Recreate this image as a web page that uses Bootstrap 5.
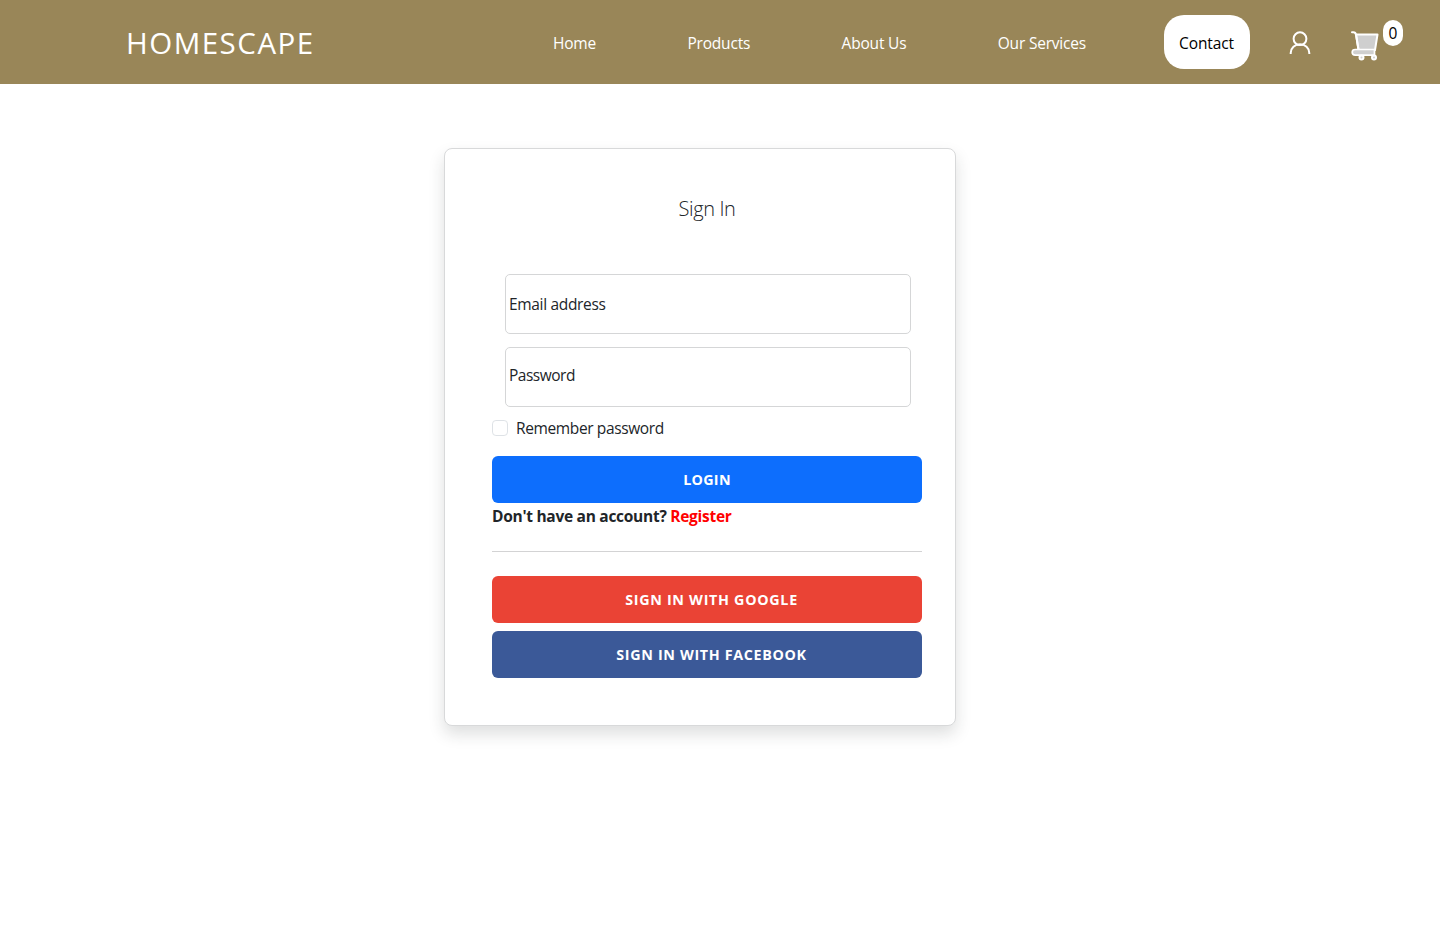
<!DOCTYPE html>
<html lang="en">
<head>
<meta charset="utf-8">
<meta name="viewport" content="width=device-width, initial-scale=1">
<title>Homescape</title>
<link href="https://cdn.jsdelivr.net/npm/bootstrap@5.3.0/dist/css/bootstrap.min.css" rel="stylesheet">
<style>
body{font-family:"Open Sans","Noto Sans",sans-serif;font-size:15.5px;line-height:24px;color:#212529;min-height:100vh}
.site-nav{background:#998658;height:84px}
.site-nav a{color:#fff;text-decoration:none;white-space:nowrap}
.site-nav .brand{font-size:29.5px;line-height:40px;letter-spacing:1.5px;margin-left:126px;width:427px;padding-top:2px}
.menu{width:533px;padding-top:2px;letter-spacing:-.2px}
.site-nav .contact{background:#fff;color:#000;border-radius:20px;height:54px;width:86px;margin-left:78px;padding:2px 1px 0 0;letter-spacing:-.1px}
.person{margin:2px 0 0 39px}
.cart{margin:7px 0 0 40px}
.count{background:#fff;color:#000;border-radius:10px;width:20px;height:26px;margin:-18px 0 0 4px;line-height:27px;font-size:15.5px}
.login-card{width:512px;height:578px;margin:64px 0 0 444px;padding:47px 33px 0 47px;border-radius:8px;border-color:#d8d9da}
.title{font-size:20px;line-height:24px;font-weight:300;letter-spacing:-.4px;margin:1px 0 53px}
.field{height:60px;width:406px;margin:0 0 13px 13px;border:1px solid #d5d6d7;border-radius:5px;padding:0 3px;line-height:58px;letter-spacing:-.33px}
.field.pass{line-height:54px;letter-spacing:-.5px}
.remember{height:24px;margin-top:-4px;letter-spacing:-.38px}
.remember .form-check-input{width:16px;height:16px;margin:0 8px 0 0;border-color:#dee2e6}
.login-card .btn{height:47px;font-size:14.3px;font-weight:700;letter-spacing:.7px;border:0;border-radius:6px;color:#fff;padding:1px 0 0}
.login-card .login{margin-top:16px;letter-spacing:.3px}
.login-card .google{background:#ea4335;padding-left:9px}
.login-card .facebook{background:#3b5998;margin-top:8px;padding-left:9px;letter-spacing:.66px}
.signup{letter-spacing:-.28px;line-height:24px;height:24px;margin-top:1px}
.signup a{color:#f00;text-decoration:none}
.rule{height:1px;background:#d3d3d4;margin:23px 0 24px}
</style>
</head>
<body>
<nav class="site-nav d-flex align-items-center">
<a class="brand" href="#">HOMESCAPE</a>
<div class="menu d-flex justify-content-between">
<a href="#">Home</a><a href="#">Products</a><a href="#">About Us</a><a href="#">Our Services</a>
</div>
<a class="contact d-flex align-items-center justify-content-center" href="#">Contact</a>
<svg class="person" width="22" height="24" viewBox="0 0 22 24" fill="none" stroke="#fff" stroke-width="2"><circle cx="11" cy="7.700" r="6.400"/><path d="M1.700 23v-1a9.300 8.700 0 0 1 18.600 0v1"/></svg>
<svg class="cart" width="28" height="30" viewBox="0 0 28 30" fill="none" stroke="#fff" stroke-width="2" stroke-linejoin="round" stroke-linecap="round"><path fill="#cfcfcf" d="M5 3.500h21.500l-2.500 15.500H7.500z"/><path d="M1 1.200h1.500q2 0 2.500 2.500l2.500 15"/><path fill="#cfcfcf" stroke-width="1.700" d="M23.500 18.500H4.200q-3 0-3 2.800t3 2.800h19.300z"/><circle cx="10.500" cy="26.600" r="2" fill="#cfcfcf"/><circle cx="23" cy="26.600" r="2" fill="#cfcfcf"/></svg>
<span class="count text-center">0</span>
</nav>
<main>
<div class="card login-card shadow">
<h5 class="title text-center">Sign In</h5>
<div class="field">Email address</div>
<div class="field pass">Password</div>
<label class="remember d-flex align-items-center"><input class="form-check-input" type="checkbox"><span>Remember password</span></label>
<button class="btn btn-primary login">LOGIN</button>
<div class="signup fw-bold">Don't have an account? <a href="#">Register</a></div>
<div class="rule"></div>
<button class="btn google">SIGN IN WITH GOOGLE</button>
<button class="btn facebook">SIGN IN WITH FACEBOOK</button>
</div>
</main>
</body>
</html>
